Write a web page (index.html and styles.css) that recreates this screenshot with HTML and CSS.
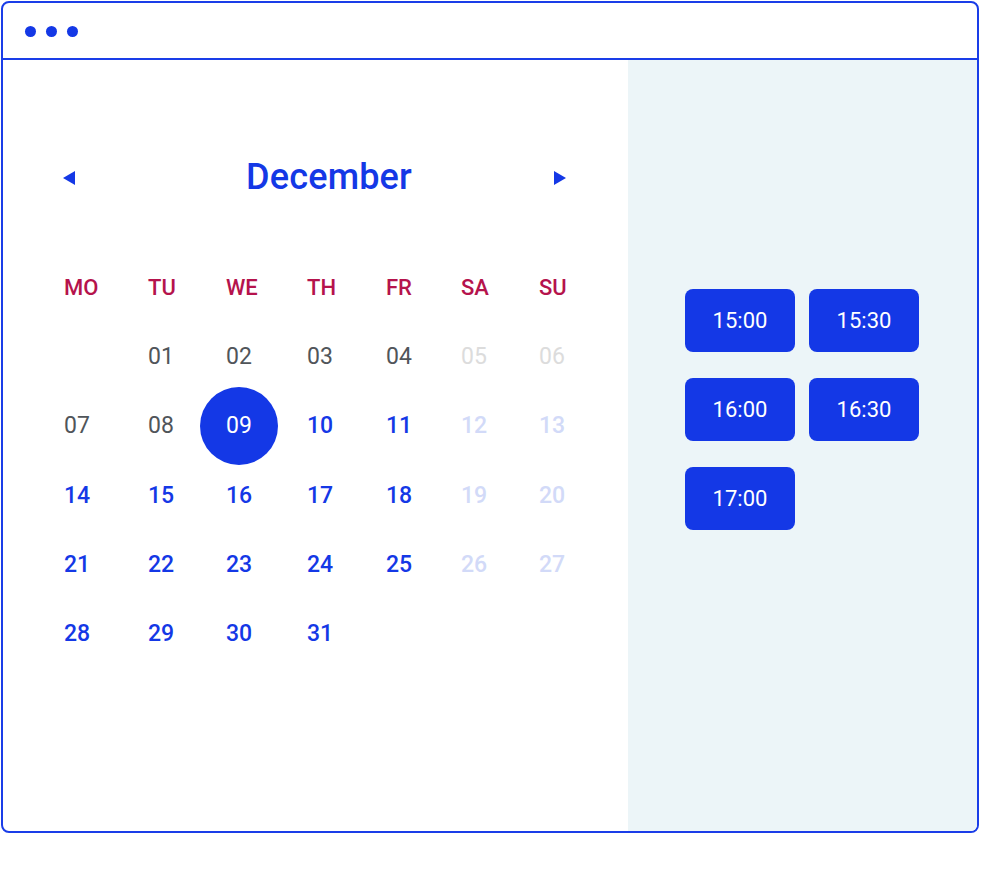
FILE: index.html
```html
<!DOCTYPE html>
<html>
<head>
<meta charset="utf-8">
<link rel="stylesheet" href="styles.css">
</head>
<body>
<div class="frame">
  <div class="topbar">
    <span class="dot"></span><span class="dot"></span><span class="dot"></span>
  </div>
  <div class="main">
    <div class="calendar">
      <div class="nav">
        <svg class="arrow" width="12" height="14" viewBox="0 0 12 14"><path d="M12 0 L0 7 L12 14 Z" fill="#1438e6"/></svg>
        <div class="month">December</div>
        <svg class="arrow" width="12" height="14" viewBox="0 0 12 14"><path d="M0 0 L12 7 L0 14 Z" fill="#1438e6"/></svg>
      </div>
      <div class="grid">
        <div class="dn">MO</div><div class="dn">TU</div><div class="dn">WE</div><div class="dn">TH</div><div class="dn">FR</div><div class="dn">SA</div><div class="dn">SU</div>
        <div></div><div class="d past">01</div><div class="d past">02</div><div class="d past">03</div><div class="d past">04</div><div class="d pastwe">05</div><div class="d pastwe">06</div>
        <div class="d past">07</div><div class="d past">08</div><div class="d sel"><span>09</span></div><div class="d">10</div><div class="d">11</div><div class="d we">12</div><div class="d we">13</div>
        <div class="d">14</div><div class="d">15</div><div class="d">16</div><div class="d">17</div><div class="d">18</div><div class="d we">19</div><div class="d we">20</div>
        <div class="d">21</div><div class="d">22</div><div class="d">23</div><div class="d">24</div><div class="d">25</div><div class="d we">26</div><div class="d we">27</div>
        <div class="d">28</div><div class="d">29</div><div class="d">30</div><div class="d">31</div>
      </div>
    </div>
    <div class="slots">
      <div class="slot-grid">
        <button class="slot">15:00</button>
        <button class="slot">15:30</button>
        <button class="slot">16:00</button>
        <button class="slot">16:30</button>
        <button class="slot">17:00</button>
      </div>
    </div>
  </div>
</div>
</body>
</html>
```

FILE: styles.css
```css
* { box-sizing: border-box; }
html, body { margin: 0; padding: 0; background: #fff; }
body { font-family: Roboto, "Liberation Sans", sans-serif; padding: 1px 0 0 1px; }

.frame {
  width: 978px;
  height: 832px;
  border: 2px solid #1a3de8;
  border-radius: 8px;
  overflow: hidden;
  display: flex;
  flex-direction: column;
}

.topbar {
  height: 57px;
  flex: none;
  border-bottom: 2px solid #1a3de8;
  display: flex;
  align-items: center;
  gap: 10px;
  padding: 2px 0 0 22px;
}
.dot {
  width: 11px;
  height: 11px;
  border-radius: 50%;
  background: #1438e6;
}

.main {
  flex: 1;
  display: flex;
}

.calendar {
  width: 625px;
  flex: none;
  padding: 98px 0 0 61px;
}

.nav {
  height: 40px;
  width: 503px;
  margin-left: -1px;
  display: flex;
  align-items: center;
  justify-content: space-between;
}
.arrow { display: block; }
.month {
  font-size: 36px;
  font-weight: 500;
  letter-spacing: 0.2px;
  color: #1438e6;
  margin-left: 29px;
  margin-top: -3px;
}

.grid {
  margin-top: 55px;
  display: grid;
  grid-template-columns: 84px 78px 81px 79px 75px 78px 78px;
  grid-auto-rows: 69.2px;
  align-items: center;
}
.dn {
  font-size: 22px;
  font-weight: 500;
  color: #b5134c;
}
.d {
  font-size: 23px;
  font-weight: 500;
  color: #1438e6;
}
.d.past { color: #50555a; font-weight: 400; }
.d.pastwe { color: #dcdcdc; font-weight: 400; }
.d.we { color: #d2daf8; }
.d.sel { font-weight: 400; }
.d.sel span {
  position: relative;
  color: #fff;
  z-index: 0;
}
.d.sel span::before {
  content: "";
  position: absolute;
  left: 50%;
  top: 50%;
  width: 78px;
  height: 78px;
  margin: -39px 0 0 -39px;
  border-radius: 50%;
  background: #1438e6;
  z-index: -1;
}

.slots {
  flex: 1;
  background: #ecf5f8;
  padding: 229px 0 0 57px;
}
.slot-grid {
  display: grid;
  grid-template-columns: 110px 110px;
  column-gap: 14px;
  row-gap: 26px;
}
.slot {
  height: 63px;
  border: none;
  border-radius: 8px;
  background: #1438e6;
  color: #fff;
  font-family: Roboto, "Liberation Sans", sans-serif;
  font-size: 22px;
  font-weight: 400;
  padding: 0;
}
```
